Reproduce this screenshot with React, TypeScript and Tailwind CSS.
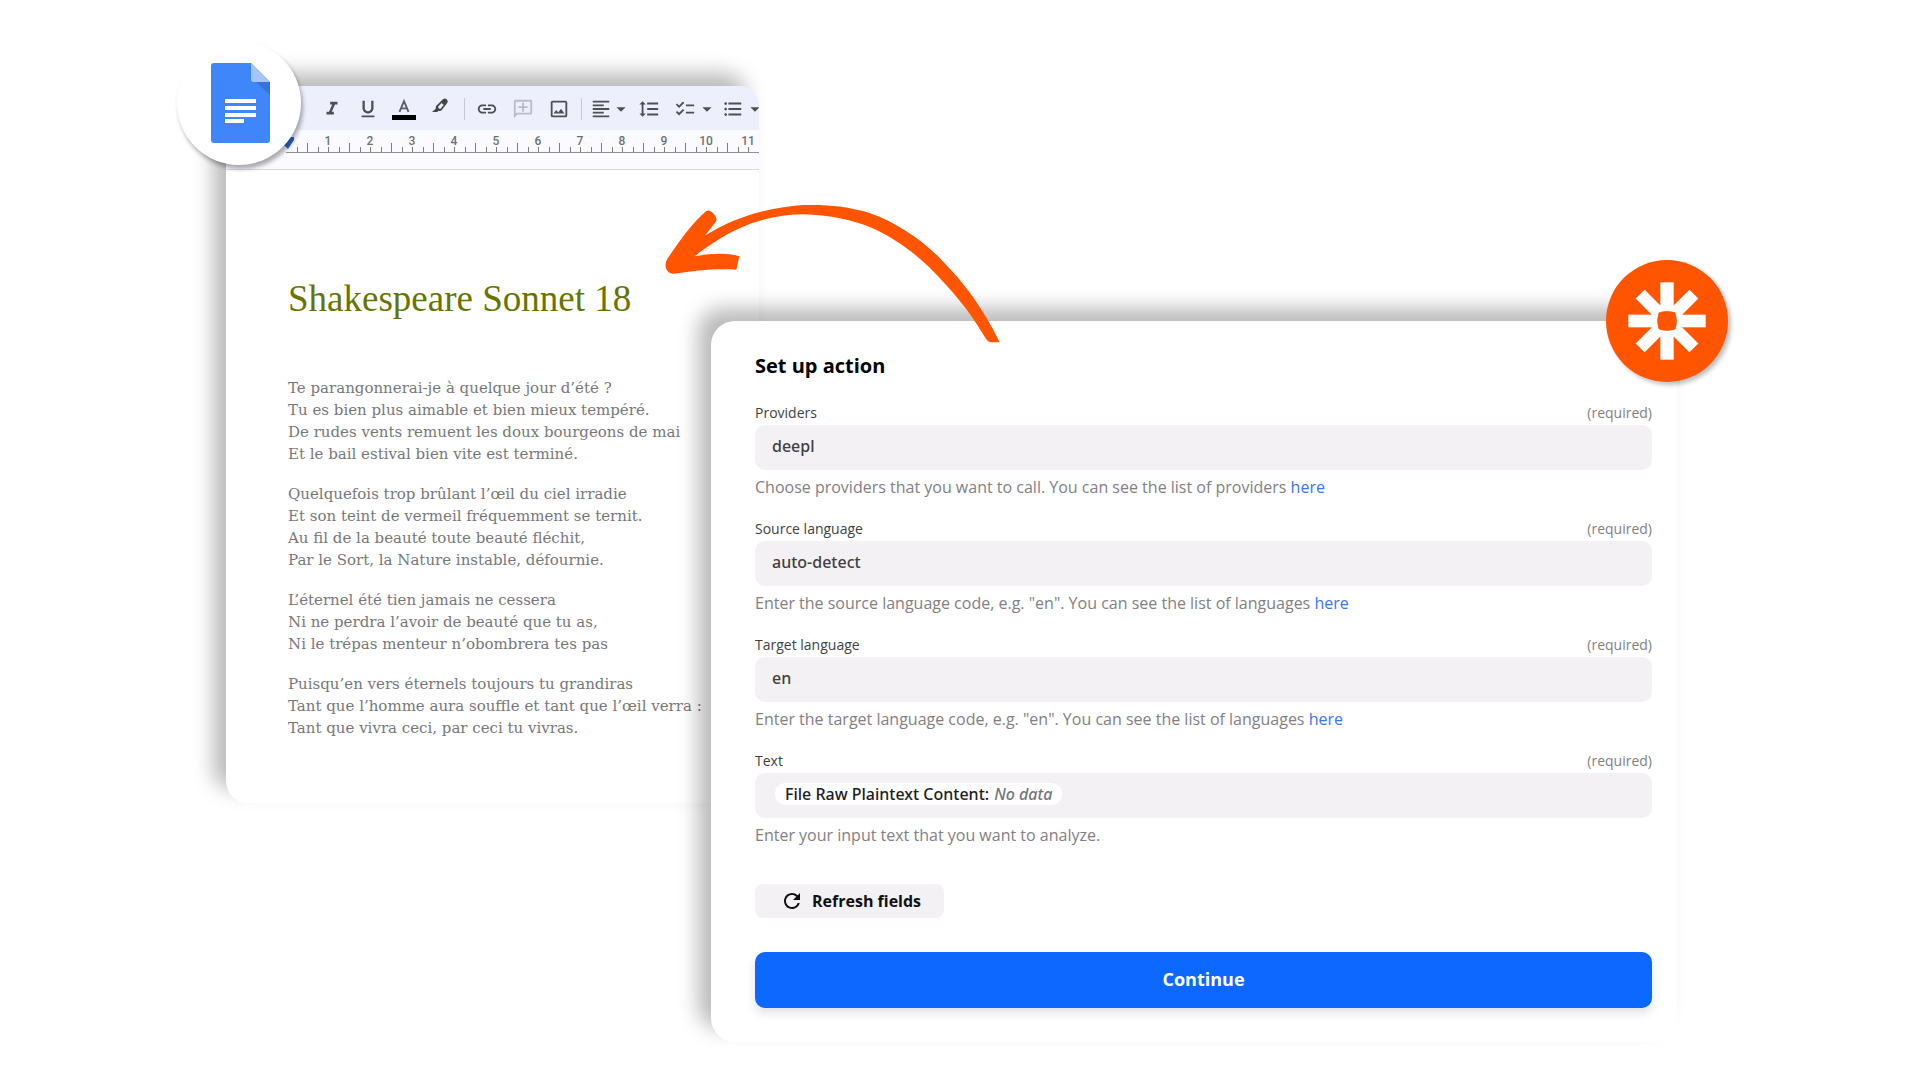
import React, { useState } from 'react';
import {
    MdArrowDropDown,
    MdChecklist,
    MdFormatAlignLeft,
    MdFormatItalic,
    MdFormatLineSpacing,
    MdFormatListBulleted,
    MdFormatUnderlined,
    MdLink,
    MdOutlineAddComment,
    MdOutlineImage,
    MdRefresh,
} from 'react-icons/md';

interface FieldConfig {
    id: string;
    label: string;
    value: string;
    hint: string;
    hasLink: boolean;
}

const fields: FieldConfig[] = [
    {
        id: 'providers',
        label: 'Providers',
        value: 'deepl',
        hint: 'Choose providers that you want to call. You can see the list of providers',
        hasLink: true,
    },
    {
        id: 'source-language',
        label: 'Source language',
        value: 'auto-detect',
        hint: 'Enter the source language code, e.g. "en". You can see the list of languages',
        hasLink: true,
    },
    {
        id: 'target-language',
        label: 'Target language',
        value: 'en',
        hint: 'Enter the target language code, e.g. "en". You can see the list of languages',
        hasLink: true,
    },
];

const stanzas = [
    [
        'Te parangonnerai-je à quelque jour d’été ?',
        'Tu es bien plus aimable et bien mieux tempéré.',
        'De rudes vents remuent les doux bourgeons de mai',
        'Et le bail estival bien vite est terminé.',
    ],
    [
        'Quelquefois trop brûlant l’œil du ciel irradie',
        'Et son teint de vermeil fréquemment se ternit.',
        'Au fil de la beauté toute beauté fléchit,',
        'Par le Sort, la Nature instable, défournie.',
    ],
    [
        'L’éternel été tien jamais ne cessera',
        'Ni ne perdra l’avoir de beauté que tu as,',
        'Ni le trépas menteur n’obombrera tes pas',
    ],
    [
        'Puisqu’en vers éternels toujours tu grandiras',
        'Tant que l’homme aura souffle et tant que l’œil verra :',
        'Tant que vivra ceci, par ceci tu vivras.',
    ],
];

const rulerMarks = [1, 2, 3, 4, 5, 6, 7, 8, 9, 10, 11];

const DocsLogo = () => (
    <svg viewBox="0 0 59 80" className="h-[80px] w-[59px]" aria-hidden="true">
        <path d="M3 0H40L59 19V77a3 3 0 0 1-3 3H3a3 3 0 0 1-3-3V3a3 3 0 0 1 3-3Z" fill="#3f86fb" />
        <path d="M45 19H59V32Z" fill="#3673d8" />
        <path d="M40 0L59 19H43a3 3 0 0 1-3-3Z" fill="#a6c4fd" />
        <path d="M14 36h31v4H14zM14 43h31v4H14zM14 50h31v4H14zM14 56h19v4H14z" fill="#fff" />
    </svg>
);

const ZapierLogo = () => (
    <svg viewBox="-183 -183 366 366" className="size-full" aria-hidden="true">
        <g fill="#fff">
            <rect x="-20" y="-116" width="40" height="232" />
            <rect x="-116" y="-19" width="232" height="38" />
            <rect x="-19" y="-114" width="38" height="228" transform="rotate(45)" />
            <rect x="-19" y="-114" width="38" height="228" transform="rotate(-45)" />
        </g>
        <path
            d="M-24 -25Q0 -34 24 -25Q33 0 25 24Q0 33 -24 24Q-33 0 -24 -25Z"
            fill="#ff5500"
            stroke="#ff5500"
            strokeWidth="2"
            strokeLinejoin="round"
        />
    </svg>
);

const TextColorIcon = () => (
    <svg viewBox="0 0 24 24" className="size-6 shrink-0" aria-hidden="true">
        <path
            d="M7.5 14.8 12 4.2l4.5 10.6M9 11.4h6"
            fill="none"
            stroke="#5b5e66"
            strokeWidth="1.9"
        />
        <rect x="0" y="18" width="24" height="5" fill="#000" />
    </svg>
);

// 3 units per pixel
const HighlighterIcon = () => (
    <svg viewBox="0 0 72 72" className="size-6 shrink-0" aria-hidden="true">
        <path
            d="M24 27 45 7Q50 3 55 6L58 9Q61 14 57 19L41 40Q37 44 31 41L28 45H12L23 35Z"
            fill="#444746"
        />
        <path d="M30 29 41 18 47 24 37 36Q32 36 30 29Z" fill="#edf0fc" />
    </svg>
);

const CurvedArrow = () => (
    <svg
        viewBox="70 70 1020 430"
        className="pointer-events-none absolute top-[203px] left-[calc(34.5%+1px)] z-20 w-[340px]"
        aria-hidden="true"
    >
        <path
            d="M1080 488C1030 384 972 308 905 240C846 180 774 130 690 100C628 80 560 74 490 76C376 84 278 116 197 167L230 124Q233 114 222 102Q208 88 200 94C160 128 128 172 84 236Q72 256 82 272Q89 283 104 282C166 274 222 266 290 270L299 230C262 218 214 221 165 230C212 192 272 154 338 130C388 113 440 104 496 104C560 106 636 120 690 142C758 170 820 216 868 262C934 328 992 396 1034 470Q1044 488 1054 488Z"
            fill="#ff5500"
        />
    </svg>
);

const ToolButton: React.FC<{ label: string; children: React.ReactNode }> = ({ label, children }) => (
    <button type="button" aria-label={label} className="flex size-[22px] shrink-0 items-center justify-center">
        {children}
    </button>
);

const Toolbar = () => (
    <div className="flex h-[44px] items-center overflow-hidden rounded-tr-[20px] bg-[#edf0fc] pt-[2px] pl-[95px] text-[22px] text-[#4c4f53]">
        <div className="flex items-center gap-[14px]">
            <ToolButton label="Italic"><MdFormatItalic /></ToolButton>
            <ToolButton label="Underline"><MdFormatUnderlined /></ToolButton>
            <ToolButton label="Text color"><TextColorIcon /></ToolButton>
            <ToolButton label="Highlight color"><HighlighterIcon /></ToolButton>
        </div>
        <span className="mr-[11px] ml-[13px] h-[22px] w-px shrink-0 bg-[#c7cad4]" />
        <div className="flex items-center gap-[14px]">
            <ToolButton label="Insert link"><MdLink /></ToolButton>
            <ToolButton label="Add comment"><MdOutlineAddComment className="-scale-x-100 text-[#b9bbc6]" /></ToolButton>
            <ToolButton label="Insert image"><MdOutlineImage /></ToolButton>
        </div>
        <span className="mr-[8px] ml-[11px] h-[22px] w-px shrink-0 bg-[#c7cad4]" />
        <ToolButton label="Align"><MdFormatAlignLeft /></ToolButton>
        <MdArrowDropDown className="-ml-[2px] shrink-0" />
        <span className="w-[6px] shrink-0" />
        <ToolButton label="Line spacing"><MdFormatLineSpacing /></ToolButton>
        <span className="w-[14px] shrink-0" />
        <ToolButton label="Checklist"><MdChecklist /></ToolButton>
        <MdArrowDropDown className="shrink-0" />
        <span className="w-[4px] shrink-0" />
        <ToolButton label="Bulleted list"><MdFormatListBulleted /></ToolButton>
        <MdArrowDropDown className="shrink-0" />
    </div>
);

const Ruler = () => (
    <div className="h-[40px] overflow-hidden border-b border-[#dadbe0] bg-[#fafaff] pl-[60px]">
        <div className="flex h-[23px] border-b border-[#8f9196]">
            <div className="flex w-[21px] shrink-0 items-end pl-[11px]">
                <span className="h-[5px] w-px bg-[#7c7e83]" />
            </div>
            {rulerMarks.map((mark) => (
                <div key={mark} className="flex w-[42px] shrink-0 flex-col justify-between">
                    <span className="pt-[4px] text-center text-[12px] leading-[14px] font-medium text-[#6d6f75]">{mark}</span>
                    <div className="-mt-[5px] flex h-[9px] items-end">
                        <span className="h-[9px] flex-1 border-l border-[#7c7e83]" />
                        <span className="h-[5px] flex-1 border-l border-[#7c7e83]" />
                        <span className="h-[5px] flex-1 border-l border-[#7c7e83]" />
                        <span className="h-[5px] flex-1 border-l border-[#7c7e83]" />
                    </div>
                </div>
            ))}
        </div>
    </div>
);

const DocumentCard = () => (
    <section className="relative z-0 col-start-2 col-end-4 row-start-1 row-end-3 min-w-0 self-start rounded-[22px] bg-white shadow-[-13px_-13px_20px_rgba(0,0,0,0.27)]">
        <Toolbar />
        <Ruler />
        <article className="px-[62px] pt-[107px] pb-[64px] whitespace-nowrap">
            <h1 className="mb-[56px] font-['Liberation_Serif',serif] text-[37px] leading-[44px] text-[#667400]">
                Shakespeare Sonnet 18
            </h1>
            <div className="flex flex-col gap-[18px] font-['DejaVu_Serif',serif] text-[15px] leading-[22px] text-[#77777a]">
                {stanzas.map((lines) => (
                    <p key={lines[0]}>
                        {lines.map((line) => (
                            <span key={line} className="block">{line}</span>
                        ))}
                    </p>
                ))}
            </div>
        </article>
        <svg viewBox="0 0 12 12" className="absolute top-[51px] left-[56px] size-3" aria-hidden="true">
            <path d="M0 0H12V3L6 12L0 6Z" fill="#2a6ad4" />
        </svg>
        <div className="absolute -top-[45px] -left-[49px] flex size-[124px] items-center justify-center rounded-full bg-white pl-[3px] shadow-[2px_4px_4px_rgba(0,0,0,0.32)]">
            <DocsLogo />
        </div>
    </section>
);

const FieldLabel: React.FC<{ id: string; label: string }> = ({ id, label }) => (
    <div className="mb-[2px] flex justify-between text-[14px] leading-[20px]">
        <label htmlFor={id} className="text-[#403f42]">{label}</label>
        <span className="text-[#828085]">(required)</span>
    </div>
);

const ActionForm = () => {
    const [values, setValues] = useState<Record<string, string>>(
        Object.fromEntries(fields.map((f) => [f.id, f.value]))
    );
    const [extraText, setExtraText] = useState('');

    return (
        <form
            onSubmit={(e) => e.preventDefault()}
            className="relative z-10 col-start-3 col-end-5 row-start-2 min-w-0 self-start rounded-[24px] bg-white pt-[31px] pr-[25px] pb-[34px] pl-[44px] font-['Open_Sans','Noto_Sans',sans-serif] shadow-[-13px_-13px_20px_rgba(0,0,0,0.27)]"
        >
            <h2 className="mb-[23px] text-[20px] leading-[28px] font-bold text-black">Set up action</h2>

            <div className="flex flex-col gap-[21px]">
                {fields.map((field) => (
                    <div key={field.id}>
                        <FieldLabel id={field.id} label={field.label} />
                        <input
                            id={field.id}
                            type="text"
                            value={values[field.id]}
                            onChange={(e) => setValues({ ...values, [field.id]: e.target.value })}
                            className="block h-[45px] w-full rounded-[10px] bg-[#f3f1f4] px-[17px] pb-[3px] font-['Noto_Sans',sans-serif] text-[16px] font-medium text-[#403f42] outline-none"
                        />
                        <p className="mt-[6px] text-[16px] leading-[22px] text-[#828085]">
                            {field.hint}{' '}
                            {field.hasLink && <a href="#" className="text-[#3d74f5]">here</a>}
                        </p>
                    </div>
                ))}

                <div>
                    <FieldLabel id="text" label="Text" />
                    <div className="flex h-[45px] items-center rounded-[10px] bg-[#f3f1f4] pr-[17px] pb-[3px] pl-[20px]">
                        <span className="flex h-[22px] shrink-0 items-center gap-[5px] rounded-[10px] bg-white px-[10px] font-['Noto_Sans',sans-serif] text-[16px] font-medium text-[#1c1c1f]">
                            File Raw Plaintext Content:
                            <em className="text-[#757478]">No data</em>
                        </span>
                        <input
                            id="text"
                            type="text"
                            value={extraText}
                            onChange={(e) => setExtraText(e.target.value)}
                            className="min-w-0 flex-1 bg-transparent px-2 outline-none"
                        />
                    </div>
                    <p className="mt-[6px] text-[16px] leading-[22px] text-[#828085]">
                        Enter your input text that you want to analyze.
                    </p>
                </div>
            </div>

            <button
                type="button"
                className="mt-[38px] flex h-[34px] items-center gap-2 rounded-[8px] bg-[#f3f1f4] pr-[23px] pl-[25px] text-[16px] font-bold text-[#101012]"
            >
                <MdRefresh className="size-6" />
                Refresh fields
            </button>

            <button
                type="submit"
                className="mt-[34px] block h-[56px] w-full rounded-[10px] bg-[#0d68ff] pb-[1px] text-[18px] font-bold text-white shadow-[0_5px_10px_rgba(60,50,80,0.15)]"
            >
                Continue
            </button>

            <div className="absolute -top-[61px] -right-[51px] size-[122px] rounded-full bg-[#ff5500] shadow-[3px_3px_4px_rgba(0,0,0,0.25)]">
                <ZapierLogo />
            </div>
        </form>
    );
};

const App: React.FC = () => (
    <main className="relative grid min-h-screen grid-cols-[226fr_485fr_48fr_918fr_243fr] grid-rows-[235px_auto] overflow-hidden bg-white pt-[86px] pb-[38px] font-['Roboto',sans-serif]">
        <DocumentCard />
        <ActionForm />
        <CurvedArrow />
    </main>
);

export default App;
